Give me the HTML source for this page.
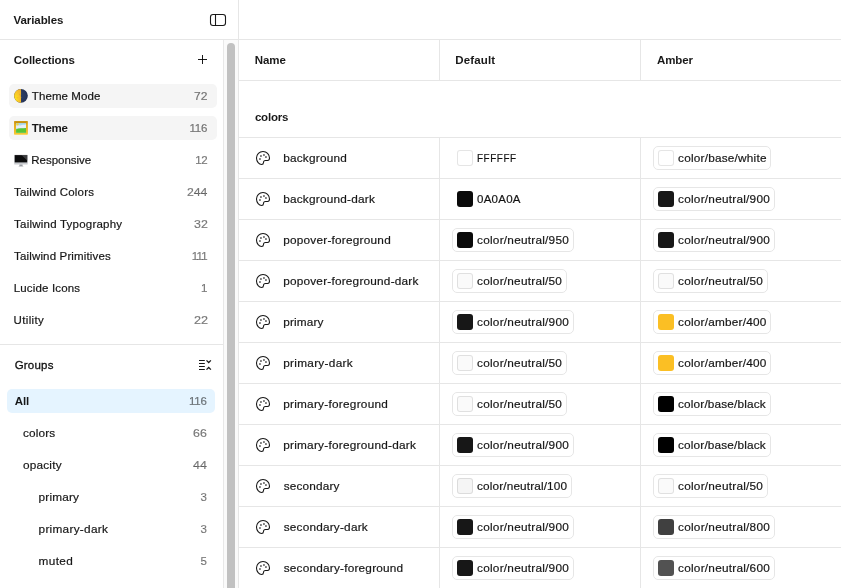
<!DOCTYPE html>
<html lang="en"><head><meta charset="utf-8"><title>Variables</title>
<style>
*{box-sizing:border-box;margin:0;padding:0}
html{background:#fff}
html,body{width:841px;height:588px;overflow:hidden}
body{position:relative;will-change:transform;font-family:"Liberation Sans",sans-serif;font-size:11.500px;color:rgba(0,0,0,.9)}
.abs{position:absolute}
.hline{position:absolute;height:1px;background:#e6e6e6}
.vline{position:absolute;width:1px;background:#e6e6e6}
.t{position:absolute;white-space:nowrap;line-height:16px;height:16px}
.cnt{color:rgba(0,0,0,.500)}
.item{position:absolute;height:24px;border-radius:5px}
.emo{position:absolute;left:5px;top:5px}
.sel{background:#f5f5f5}
.selb{background:#e5f4ff}
.row{position:absolute;left:239px;width:602px;height:41px;border-top:1px solid #e6e6e6}
.row .pal{position:absolute;left:16px;top:12px}
.val{position:absolute;top:8px;height:24px}
.val.chip{border:1px solid #e6e6e6;border-radius:5px}
.val .t{top:4px}
.val.chip .t{top:3px;margin-left:-1px}
.sw{position:absolute;left:5px;top:4px;width:16px;height:16px;border-radius:3px}
.chip .sw{left:4px;top:3px}
.sw.lt{box-shadow:inset 0 0 0 1px rgba(0,0,0,.1)}
</style></head><body>
<aside>
<div class="vline" style="left:238px;top:0;height:588px"></div>
<div class="hline" style="left:0;top:39px;width:841px"></div>
<span class="t" style="left:13.60px;top:12px;letter-spacing:-0.088px;font-weight:700;">Variables</span>
<svg class="abs" style="left:209px;top:12px" width="18" height="16" viewBox="0 0 18 16" fill="none"><rect x="1.500" y="2.500" width="15" height="11" rx="2.500" stroke="#000" stroke-opacity=".9" stroke-width="1.100"/><path d="M6.500 2.500v11" stroke="#000" stroke-opacity=".9" stroke-width="1.100"/></svg>
<div class="abs" style="left:223px;top:40px;width:15px;height:548px;background:#fafafa;border-left:1px solid #e8e8e8"></div>
<div class="abs" style="left:227px;top:43px;width:8px;height:560px;border-radius:4px;background:#c1c1c1"></div>
<span class="t" style="left:13.80px;top:52px;letter-spacing:-0.100px;font-weight:700;">Collections</span>
<svg class="abs" style="left:194px;top:51px" width="17" height="17" viewBox="0 0 17 17"><path d="M8.500 4v9M4 8.500h9" stroke="#000" stroke-opacity=".9" fill="none"/></svg>
<nav>
<div class="item sel" style="left:9px;top:84px;width:208px"><svg class="emo" width="14" height="14" viewBox="0 0 14 14"><defs><radialGradient id="mg" cx=".25" cy=".7" r=".9"><stop offset="0" stop-color="#ffe21c"/><stop offset=".6" stop-color="#f6c02c"/><stop offset="1" stop-color="#eeaf30"/></radialGradient><radialGradient id="md" cx=".4" cy=".5" r=".7"><stop offset="0" stop-color="#2e4168"/><stop offset=".7" stop-color="#27365a"/><stop offset="1" stop-color="#172340"/></radialGradient></defs><circle cx="6.950" cy="6.850" r="6.850" fill="url(#md)"/><path d="M6.950 0A6.850 6.850 0 0 0 6.950 13.700C7.300 11.500 6.700 10 7.200 8.200 6.300 6.800 7.500 5.600 7 4.200 7.300 2.800 6.800 1.400 6.950 0Z" fill="url(#mg)"/><ellipse cx="5.900" cy="5.500" rx=".9" ry=".7" fill="#dfa024" opacity=".55"/><ellipse cx="3.400" cy="8.800" rx="1" ry=".8" fill="#e9b026" opacity=".45"/></svg><span class="t" style="left:22.85px;top:4px;letter-spacing:0.083px;-webkit-text-stroke-width:.200px;">Theme Mode</span><span class="t cnt" style="left:185.28px;top:4px;letter-spacing:0.000px;-webkit-text-stroke-width:.200px;transform:scaleX(1.0468085106382978);transform-origin:0 50%;">72</span></div>
<div class="item sel" style="left:9px;top:116px;width:208px"><svg class="emo" width="14" height="14" viewBox="0 0 14 14"><defs><linearGradient id="fg" x1="0" y1="0" x2="0" y2="1"><stop offset="0" stop-color="#c89413"/><stop offset=".2" stop-color="#e3ab1f"/><stop offset=".8" stop-color="#efbd2b"/><stop offset="1" stop-color="#f8d23a"/></linearGradient></defs><rect x="0" y=".1" width="13.900" height="13.700" rx=".7" fill="url(#fg)"/><rect x="1.500" y="1.500" width="10.900" height="1" fill="#a87508" opacity=".7"/><rect x="2.100" y="2.100" width="9.900" height="9.700" fill="#a9daf2"/><path d="M2.100 4.600C4 3.600 6 5 8 4 9.500 3.300 11 4 12 3.600V7.500H2.100Z" fill="#e9eef6"/><circle cx="3.600" cy="3.400" r="1.100" fill="#f7d634"/><path d="M2.100 8.300C5 6.800 8.500 7.800 12 7.100V11.800H2.100Z" fill="#57c634"/></svg><span class="t" style="left:22.80px;top:4px;letter-spacing:-0.213px;font-weight:700;">Theme</span><span class="t cnt" style="left:180.45px;top:4px;letter-spacing:-0.175px;-webkit-text-stroke-width:.200px;">116</span></div>
<div class="item" style="left:9px;top:148px;width:208px"><svg class="emo" width="14" height="14" viewBox="0 0 14 14"><rect x=".2" y="1.700" width="13.500" height="9.900" rx=".6" fill="#c9cbcf"/><rect x=".7" y="2.100" width="12.500" height="7.300" fill="#0c0c0d"/><path d="M7.500 2.100h5.700v5.500Z" fill="#4a4b4d" opacity=".8"/><path d="M5.500 11.600h3l.2 1.500H5.300Z" fill="#9b9ea3"/><rect x="4.600" y="13" width="4.800" height=".8" rx=".3" fill="#c4c6c9"/></svg><span class="t" style="left:22.35px;top:4px;letter-spacing:-0.033px;-webkit-text-stroke-width:.200px;">Responsive</span><span class="t cnt" style="left:186.15px;top:4px;letter-spacing:-0.300px;-webkit-text-stroke-width:.200px;">12</span></div>
<div class="item" style="left:9px;top:180px;width:208px"><span class="t" style="left:5.05px;top:4px;letter-spacing:0.182px;-webkit-text-stroke-width:.200px;">Tailwind Colors</span><span class="t cnt" style="left:177.87px;top:4px;letter-spacing:0.000px;-webkit-text-stroke-width:.200px;transform:scaleX(1.0648648648648649);transform-origin:0 50%;">244</span></div>
<div class="item" style="left:9px;top:212px;width:208px"><span class="t" style="left:5.05px;top:4px;letter-spacing:0.225px;-webkit-text-stroke-width:.200px;">Tailwind Typography</span><span class="t cnt" style="left:184.93px;top:4px;letter-spacing:0.000px;-webkit-text-stroke-width:.200px;transform:scaleX(1.075);transform-origin:0 50%;">32</span></div>
<div class="item" style="left:9px;top:244px;width:208px"><span class="t" style="left:5.05px;top:4px;letter-spacing:0.156px;-webkit-text-stroke-width:.200px;">Tailwind Primitives</span><span class="t cnt" style="left:182.75px;top:4px;letter-spacing:-0.825px;-webkit-text-stroke-width:.200px;">111</span></div>
<div class="item" style="left:9px;top:276px;width:208px"><span class="t" style="left:4.75px;top:4px;letter-spacing:0.164px;-webkit-text-stroke-width:.200px;">Lucide Icons</span><span class="t cnt" style="left:192.10px;top:4px;letter-spacing:0.000px;-webkit-text-stroke-width:.200px;">1</span></div>
<div class="item" style="left:9px;top:308px;width:208px"><span class="t" style="left:4.55px;top:4px;letter-spacing:0.350px;-webkit-text-stroke-width:.200px;">Utility</span><span class="t cnt" style="left:184.65px;top:4px;letter-spacing:0.000px;-webkit-text-stroke-width:.200px;transform:scaleX(1.097872340425532);transform-origin:0 50%;">22</span></div>
</nav>
<div class="hline" style="left:0;top:344px;width:223px"></div>
<span class="t" style="left:14.70px;top:357px;letter-spacing:0.200px;-webkit-text-stroke-width:.320px;">Groups</span>
<svg class="abs" style="left:197px;top:357px" width="16" height="16" viewBox="0 0 16 16" fill="none" stroke="#000" stroke-opacity=".9"><path d="M2 3.500h5.800M2 6.500h5.800M2 9.500h5.800M2 12.500h5.800"/><path d="M9.500 3.400l2.200 2.100 2.200-2.100M9.500 12.600l2.200-2.100 2.200 2.100" stroke-width="1.300"/></svg>
<nav>
<div class="item selb" style="left:7px;top:389px;width:208px"><span class="t" style="left:7.75px;top:4px;letter-spacing:-0.175px;font-weight:700;">All</span><span class="t cnt" style="left:181.95px;top:4px;letter-spacing:-0.225px;-webkit-text-stroke-width:.200px;">116</span></div>
<div class="item" style="left:7px;top:421px;width:208px"><span class="t" style="left:15.95px;top:4px;letter-spacing:0.140px;font-size:11.800px;-webkit-text-stroke-width:.200px;">colors</span><span class="t cnt" style="left:186.06px;top:4px;letter-spacing:0.000px;-webkit-text-stroke-width:.200px;transform:scaleX(1.075);transform-origin:0 50%;">66</span></div>
<div class="item" style="left:7px;top:453px;width:208px"><span class="t" style="left:15.95px;top:4px;letter-spacing:0.208px;font-size:11.800px;-webkit-text-stroke-width:.200px;">opacity</span><span class="t cnt" style="left:186.03px;top:4px;letter-spacing:-0.000px;-webkit-text-stroke-width:.200px;transform:scaleX(1.0775510204081633);transform-origin:0 50%;">44</span></div>
<div class="item" style="left:7px;top:485px;width:208px"><span class="t" style="left:31.55px;top:4px;letter-spacing:0.175px;font-size:11.800px;-webkit-text-stroke-width:.200px;">primary</span><span class="t cnt" style="left:193.50px;top:4px;letter-spacing:0.000px;-webkit-text-stroke-width:.200px;">3</span></div>
<div class="item" style="left:7px;top:517px;width:208px"><span class="t" style="left:31.55px;top:4px;letter-spacing:0.282px;font-size:11.800px;-webkit-text-stroke-width:.200px;">primary-dark</span><span class="t cnt" style="left:193.50px;top:4px;letter-spacing:0.000px;-webkit-text-stroke-width:.200px;">3</span></div>
<div class="item" style="left:7px;top:549px;width:208px"><span class="t" style="left:31.55px;top:4px;letter-spacing:0.375px;font-size:11.800px;-webkit-text-stroke-width:.200px;">muted</span><span class="t cnt" style="left:193.50px;top:4px;letter-spacing:0.000px;-webkit-text-stroke-width:.200px;">5</span></div>
</nav>
</aside>
<main>
<div class="vline" style="left:439px;top:40px;height:40px"></div>
<div class="vline" style="left:640px;top:40px;height:40px"></div>
<div class="hline" style="left:239px;top:80px;width:602px"></div>
<span class="t" style="left:254.65px;top:52px;letter-spacing:-0.017px;font-weight:700;">Name</span>
<span class="t" style="left:455.35px;top:52px;letter-spacing:0.133px;font-weight:700;">Default</span>
<span class="t" style="left:657.05px;top:52px;letter-spacing:-0.125px;font-weight:700;">Amber</span>
<span class="t" style="left:254.90px;top:109px;letter-spacing:-0.200px;font-weight:700;">colors</span>
<div class="vline" style="left:439px;top:138px;height:450px"></div>
<div class="vline" style="left:640px;top:138px;height:450px"></div>
<div class="row" style="top:137px"><svg class="pal" width="16" height="16" viewBox="0 0 16 16" fill="none"><path d="M8 1.500C4.400 1.500 1.500 4.400 1.500 8c0 3.500 2.600 6.500 5.100 6.500 1.400 0 1.900-.9 1.900-2 0-1.200.6-2 2-2h2c1.300 0 2-1 2-2.500 0-3.600-2.900-6.500-6.500-6.500Z" stroke="#000" stroke-opacity=".92" stroke-width="1.040"/><rect x="5.200" y="5.200" width="1.500" height="1.500" rx=".3" fill="#000" fill-opacity=".85"/><rect x="8.200" y="4.200" width="1.500" height="1.500" rx=".3" fill="#000" fill-opacity=".85"/><rect x="10.200" y="6.200" width="1.500" height="1.500" rx=".3" fill="#000" fill-opacity=".85"/><rect x="4.200" y="8.200" width="1.500" height="1.500" rx=".3" fill="#000" fill-opacity=".85"/></svg><span class="t" style="left:44.15px;top:12px;letter-spacing:0.228px;font-size:11.800px;-webkit-text-stroke-width:.200px;">background</span><div class="val" style="left:213px;width:80px"><i class="sw lt" style="background:#FFFFFF"></i><span class="t" style="left:24.66px;top:4px;letter-spacing:0.660px;-webkit-text-stroke-width:.200px;transform:scaleX(0.86);transform-origin:0 50%;">FFFFFF</span></div><div class="val chip" style="left:414px;width:118px"><i class="sw lt" style="background:#FFFFFF"></i><span class="t" style="left:25.05px;top:3px;letter-spacing:0.213px;font-size:11.800px;-webkit-text-stroke-width:.200px;">color/base/white</span></div></div>
<div class="row" style="top:178px"><svg class="pal" width="16" height="16" viewBox="0 0 16 16" fill="none"><path d="M8 1.500C4.400 1.500 1.500 4.400 1.500 8c0 3.500 2.600 6.500 5.100 6.500 1.400 0 1.900-.9 1.900-2 0-1.200.6-2 2-2h2c1.300 0 2-1 2-2.500 0-3.600-2.900-6.500-6.500-6.500Z" stroke="#000" stroke-opacity=".92" stroke-width="1.040"/><rect x="5.200" y="5.200" width="1.500" height="1.500" rx=".3" fill="#000" fill-opacity=".85"/><rect x="8.200" y="4.200" width="1.500" height="1.500" rx=".3" fill="#000" fill-opacity=".85"/><rect x="10.200" y="6.200" width="1.500" height="1.500" rx=".3" fill="#000" fill-opacity=".85"/><rect x="4.200" y="8.200" width="1.500" height="1.500" rx=".3" fill="#000" fill-opacity=".85"/></svg><span class="t" style="left:44.15px;top:12px;letter-spacing:0.225px;font-size:11.800px;-webkit-text-stroke-width:.200px;">background-dark</span><div class="val" style="left:213px;width:80px"><i class="sw" style="background:#0A0A0A"></i><span class="t" style="left:25.05px;top:4px;letter-spacing:0.240px;-webkit-text-stroke-width:.200px;">0A0A0A</span></div><div class="val chip" style="left:414px;width:122px"><i class="sw" style="background:#171717"></i><span class="t" style="left:25.05px;top:3px;letter-spacing:0.241px;font-size:11.800px;-webkit-text-stroke-width:.200px;">color/neutral/900</span></div></div>
<div class="row" style="top:219px"><svg class="pal" width="16" height="16" viewBox="0 0 16 16" fill="none"><path d="M8 1.500C4.400 1.500 1.500 4.400 1.500 8c0 3.500 2.600 6.500 5.100 6.500 1.400 0 1.900-.9 1.900-2 0-1.200.6-2 2-2h2c1.300 0 2-1 2-2.500 0-3.600-2.900-6.500-6.500-6.500Z" stroke="#000" stroke-opacity=".92" stroke-width="1.040"/><rect x="5.200" y="5.200" width="1.500" height="1.500" rx=".3" fill="#000" fill-opacity=".85"/><rect x="8.200" y="4.200" width="1.500" height="1.500" rx=".3" fill="#000" fill-opacity=".85"/><rect x="10.200" y="6.200" width="1.500" height="1.500" rx=".3" fill="#000" fill-opacity=".85"/><rect x="4.200" y="8.200" width="1.500" height="1.500" rx=".3" fill="#000" fill-opacity=".85"/></svg><span class="t" style="left:44.15px;top:12px;letter-spacing:0.232px;font-size:11.800px;-webkit-text-stroke-width:.200px;">popover-foreground</span><div class="val chip" style="left:213px;width:122px"><i class="sw" style="background:#0A0A0A"></i><span class="t" style="left:25.05px;top:3px;letter-spacing:0.241px;font-size:11.800px;-webkit-text-stroke-width:.200px;">color/neutral/950</span></div><div class="val chip" style="left:414px;width:122px"><i class="sw" style="background:#171717"></i><span class="t" style="left:25.05px;top:3px;letter-spacing:0.241px;font-size:11.800px;-webkit-text-stroke-width:.200px;">color/neutral/900</span></div></div>
<div class="row" style="top:260px"><svg class="pal" width="16" height="16" viewBox="0 0 16 16" fill="none"><path d="M8 1.500C4.400 1.500 1.500 4.400 1.500 8c0 3.500 2.600 6.500 5.100 6.500 1.400 0 1.900-.9 1.900-2 0-1.200.6-2 2-2h2c1.300 0 2-1 2-2.500 0-3.600-2.900-6.500-6.500-6.500Z" stroke="#000" stroke-opacity=".92" stroke-width="1.040"/><rect x="5.200" y="5.200" width="1.500" height="1.500" rx=".3" fill="#000" fill-opacity=".85"/><rect x="8.200" y="4.200" width="1.500" height="1.500" rx=".3" fill="#000" fill-opacity=".85"/><rect x="10.200" y="6.200" width="1.500" height="1.500" rx=".3" fill="#000" fill-opacity=".85"/><rect x="4.200" y="8.200" width="1.500" height="1.500" rx=".3" fill="#000" fill-opacity=".85"/></svg><span class="t" style="left:44.15px;top:12px;letter-spacing:0.216px;font-size:11.800px;-webkit-text-stroke-width:.200px;">popover-foreground-dark</span><div class="val chip" style="left:213px;width:115px"><i class="sw lt" style="background:#FAFAFA"></i><span class="t" style="left:25.05px;top:3px;letter-spacing:0.237px;font-size:11.800px;-webkit-text-stroke-width:.200px;">color/neutral/50</span></div><div class="val chip" style="left:414px;width:115px"><i class="sw lt" style="background:#FAFAFA"></i><span class="t" style="left:25.05px;top:3px;letter-spacing:0.237px;font-size:11.800px;-webkit-text-stroke-width:.200px;">color/neutral/50</span></div></div>
<div class="row" style="top:301px"><svg class="pal" width="16" height="16" viewBox="0 0 16 16" fill="none"><path d="M8 1.500C4.400 1.500 1.500 4.400 1.500 8c0 3.500 2.600 6.500 5.100 6.500 1.400 0 1.900-.9 1.900-2 0-1.200.6-2 2-2h2c1.300 0 2-1 2-2.500 0-3.600-2.900-6.500-6.500-6.500Z" stroke="#000" stroke-opacity=".92" stroke-width="1.040"/><rect x="5.200" y="5.200" width="1.500" height="1.500" rx=".3" fill="#000" fill-opacity=".85"/><rect x="8.200" y="4.200" width="1.500" height="1.500" rx=".3" fill="#000" fill-opacity=".85"/><rect x="10.200" y="6.200" width="1.500" height="1.500" rx=".3" fill="#000" fill-opacity=".85"/><rect x="4.200" y="8.200" width="1.500" height="1.500" rx=".3" fill="#000" fill-opacity=".85"/></svg><span class="t" style="left:44.15px;top:12px;letter-spacing:0.175px;font-size:11.800px;-webkit-text-stroke-width:.200px;">primary</span><div class="val chip" style="left:213px;width:122px"><i class="sw" style="background:#171717"></i><span class="t" style="left:25.05px;top:3px;letter-spacing:0.241px;font-size:11.800px;-webkit-text-stroke-width:.200px;">color/neutral/900</span></div><div class="val chip" style="left:414px;width:118px"><i class="sw" style="background:#FBBF24"></i><span class="t" style="left:25.05px;top:3px;letter-spacing:0.211px;font-size:11.800px;-webkit-text-stroke-width:.200px;">color/amber/400</span></div></div>
<div class="row" style="top:342px"><svg class="pal" width="16" height="16" viewBox="0 0 16 16" fill="none"><path d="M8 1.500C4.400 1.500 1.500 4.400 1.500 8c0 3.500 2.600 6.500 5.100 6.500 1.400 0 1.900-.9 1.900-2 0-1.200.6-2 2-2h2c1.300 0 2-1 2-2.500 0-3.600-2.900-6.500-6.500-6.500Z" stroke="#000" stroke-opacity=".92" stroke-width="1.040"/><rect x="5.200" y="5.200" width="1.500" height="1.500" rx=".3" fill="#000" fill-opacity=".85"/><rect x="8.200" y="4.200" width="1.500" height="1.500" rx=".3" fill="#000" fill-opacity=".85"/><rect x="10.200" y="6.200" width="1.500" height="1.500" rx=".3" fill="#000" fill-opacity=".85"/><rect x="4.200" y="8.200" width="1.500" height="1.500" rx=".3" fill="#000" fill-opacity=".85"/></svg><span class="t" style="left:44.15px;top:12px;letter-spacing:0.300px;font-size:11.800px;-webkit-text-stroke-width:.200px;">primary-dark</span><div class="val chip" style="left:213px;width:115px"><i class="sw lt" style="background:#FAFAFA"></i><span class="t" style="left:25.05px;top:3px;letter-spacing:0.237px;font-size:11.800px;-webkit-text-stroke-width:.200px;">color/neutral/50</span></div><div class="val chip" style="left:414px;width:118px"><i class="sw" style="background:#FBBF24"></i><span class="t" style="left:25.05px;top:3px;letter-spacing:0.211px;font-size:11.800px;-webkit-text-stroke-width:.200px;">color/amber/400</span></div></div>
<div class="row" style="top:383px"><svg class="pal" width="16" height="16" viewBox="0 0 16 16" fill="none"><path d="M8 1.500C4.400 1.500 1.500 4.400 1.500 8c0 3.500 2.600 6.500 5.100 6.500 1.400 0 1.900-.9 1.900-2 0-1.200.6-2 2-2h2c1.300 0 2-1 2-2.500 0-3.600-2.900-6.500-6.500-6.500Z" stroke="#000" stroke-opacity=".92" stroke-width="1.040"/><rect x="5.200" y="5.200" width="1.500" height="1.500" rx=".3" fill="#000" fill-opacity=".85"/><rect x="8.200" y="4.200" width="1.500" height="1.500" rx=".3" fill="#000" fill-opacity=".85"/><rect x="10.200" y="6.200" width="1.500" height="1.500" rx=".3" fill="#000" fill-opacity=".85"/><rect x="4.200" y="8.200" width="1.500" height="1.500" rx=".3" fill="#000" fill-opacity=".85"/></svg><span class="t" style="left:44.15px;top:12px;letter-spacing:0.259px;font-size:11.800px;-webkit-text-stroke-width:.200px;">primary-foreground</span><div class="val chip" style="left:213px;width:115px"><i class="sw lt" style="background:#FAFAFA"></i><span class="t" style="left:25.05px;top:3px;letter-spacing:0.237px;font-size:11.800px;-webkit-text-stroke-width:.200px;">color/neutral/50</span></div><div class="val chip" style="left:414px;width:118px"><i class="sw" style="background:#000000"></i><span class="t" style="left:25.05px;top:3px;letter-spacing:0.153px;font-size:11.800px;-webkit-text-stroke-width:.200px;">color/base/black</span></div></div>
<div class="row" style="top:424px"><svg class="pal" width="16" height="16" viewBox="0 0 16 16" fill="none"><path d="M8 1.500C4.400 1.500 1.500 4.400 1.500 8c0 3.500 2.600 6.500 5.100 6.500 1.400 0 1.900-.9 1.900-2 0-1.200.6-2 2-2h2c1.300 0 2-1 2-2.500 0-3.600-2.900-6.500-6.500-6.500Z" stroke="#000" stroke-opacity=".92" stroke-width="1.040"/><rect x="5.200" y="5.200" width="1.500" height="1.500" rx=".3" fill="#000" fill-opacity=".85"/><rect x="8.200" y="4.200" width="1.500" height="1.500" rx=".3" fill="#000" fill-opacity=".85"/><rect x="10.200" y="6.200" width="1.500" height="1.500" rx=".3" fill="#000" fill-opacity=".85"/><rect x="4.200" y="8.200" width="1.500" height="1.500" rx=".3" fill="#000" fill-opacity=".85"/></svg><span class="t" style="left:44.15px;top:12px;letter-spacing:0.255px;font-size:11.800px;-webkit-text-stroke-width:.200px;">primary-foreground-dark</span><div class="val chip" style="left:213px;width:122px"><i class="sw" style="background:#171717"></i><span class="t" style="left:25.05px;top:3px;letter-spacing:0.241px;font-size:11.800px;-webkit-text-stroke-width:.200px;">color/neutral/900</span></div><div class="val chip" style="left:414px;width:118px"><i class="sw" style="background:#000000"></i><span class="t" style="left:25.05px;top:3px;letter-spacing:0.153px;font-size:11.800px;-webkit-text-stroke-width:.200px;">color/base/black</span></div></div>
<div class="row" style="top:465px"><svg class="pal" width="16" height="16" viewBox="0 0 16 16" fill="none"><path d="M8 1.500C4.400 1.500 1.500 4.400 1.500 8c0 3.500 2.600 6.500 5.100 6.500 1.400 0 1.900-.9 1.900-2 0-1.200.6-2 2-2h2c1.300 0 2-1 2-2.500 0-3.600-2.900-6.500-6.500-6.500Z" stroke="#000" stroke-opacity=".92" stroke-width="1.040"/><rect x="5.200" y="5.200" width="1.500" height="1.500" rx=".3" fill="#000" fill-opacity=".85"/><rect x="8.200" y="4.200" width="1.500" height="1.500" rx=".3" fill="#000" fill-opacity=".85"/><rect x="10.200" y="6.200" width="1.500" height="1.500" rx=".3" fill="#000" fill-opacity=".85"/><rect x="4.200" y="8.200" width="1.500" height="1.500" rx=".3" fill="#000" fill-opacity=".85"/></svg><span class="t" style="left:44.65px;top:12px;letter-spacing:0.181px;font-size:11.800px;-webkit-text-stroke-width:.200px;">secondary</span><div class="val chip" style="left:213px;width:120px"><i class="sw lt" style="background:#F5F5F5"></i><span class="t" style="left:25.05px;top:3px;letter-spacing:0.134px;font-size:11.800px;-webkit-text-stroke-width:.200px;">color/neutral/100</span></div><div class="val chip" style="left:414px;width:115px"><i class="sw lt" style="background:#FAFAFA"></i><span class="t" style="left:25.05px;top:3px;letter-spacing:0.237px;font-size:11.800px;-webkit-text-stroke-width:.200px;">color/neutral/50</span></div></div>
<div class="row" style="top:506px"><svg class="pal" width="16" height="16" viewBox="0 0 16 16" fill="none"><path d="M8 1.500C4.400 1.500 1.500 4.400 1.500 8c0 3.500 2.600 6.500 5.100 6.500 1.400 0 1.900-.9 1.900-2 0-1.200.6-2 2-2h2c1.300 0 2-1 2-2.500 0-3.600-2.900-6.500-6.500-6.500Z" stroke="#000" stroke-opacity=".92" stroke-width="1.040"/><rect x="5.200" y="5.200" width="1.500" height="1.500" rx=".3" fill="#000" fill-opacity=".85"/><rect x="8.200" y="4.200" width="1.500" height="1.500" rx=".3" fill="#000" fill-opacity=".85"/><rect x="10.200" y="6.200" width="1.500" height="1.500" rx=".3" fill="#000" fill-opacity=".85"/><rect x="4.200" y="8.200" width="1.500" height="1.500" rx=".3" fill="#000" fill-opacity=".85"/></svg><span class="t" style="left:44.65px;top:12px;letter-spacing:0.212px;font-size:11.800px;-webkit-text-stroke-width:.200px;">secondary-dark</span><div class="val chip" style="left:213px;width:122px"><i class="sw" style="background:#171717"></i><span class="t" style="left:25.05px;top:3px;letter-spacing:0.241px;font-size:11.800px;-webkit-text-stroke-width:.200px;">color/neutral/900</span></div><div class="val chip" style="left:414px;width:122px"><i class="sw" style="background:#404040"></i><span class="t" style="left:25.05px;top:3px;letter-spacing:0.241px;font-size:11.800px;-webkit-text-stroke-width:.200px;">color/neutral/800</span></div></div>
<div class="row" style="top:547px"><svg class="pal" width="16" height="16" viewBox="0 0 16 16" fill="none"><path d="M8 1.500C4.400 1.500 1.500 4.400 1.500 8c0 3.500 2.600 6.500 5.100 6.500 1.400 0 1.900-.9 1.900-2 0-1.200.6-2 2-2h2c1.300 0 2-1 2-2.500 0-3.600-2.900-6.500-6.500-6.500Z" stroke="#000" stroke-opacity=".92" stroke-width="1.040"/><rect x="5.200" y="5.200" width="1.500" height="1.500" rx=".3" fill="#000" fill-opacity=".85"/><rect x="8.200" y="4.200" width="1.500" height="1.500" rx=".3" fill="#000" fill-opacity=".85"/><rect x="10.200" y="6.200" width="1.500" height="1.500" rx=".3" fill="#000" fill-opacity=".85"/><rect x="4.200" y="8.200" width="1.500" height="1.500" rx=".3" fill="#000" fill-opacity=".85"/></svg><span class="t" style="left:44.65px;top:12px;letter-spacing:0.216px;font-size:11.800px;-webkit-text-stroke-width:.200px;">secondary-foreground</span><div class="val chip" style="left:213px;width:122px"><i class="sw" style="background:#171717"></i><span class="t" style="left:25.05px;top:3px;letter-spacing:0.241px;font-size:11.800px;-webkit-text-stroke-width:.200px;">color/neutral/900</span></div><div class="val chip" style="left:414px;width:122px"><i class="sw" style="background:#525252"></i><span class="t" style="left:25.05px;top:3px;letter-spacing:0.241px;font-size:11.800px;-webkit-text-stroke-width:.200px;">color/neutral/600</span></div></div>
</main>
</body></html>
